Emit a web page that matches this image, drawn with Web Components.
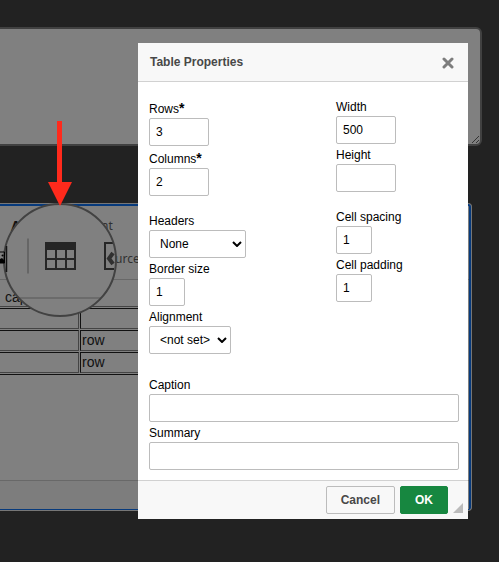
<!DOCTYPE html>
<html lang="en">
<head>
<meta charset="utf-8">
<title>Table Properties</title>
<style>
html, body { height: 100%; }
body { margin: 0; background: #222; font-family: "Liberation Sans", Arial, sans-serif; }
</style>
</head>
<body>
<editor-page></editor-page>
<script>
class BaseElement extends HTMLElement {
  constructor() {
    super();
    this.attachShadow({ mode: 'open' });
  }
  connectedCallback() {
    this.shadowRoot.innerHTML = this.template();
  }
}

/* Labelled text box or drop-down */
customElements.define('form-field', class extends BaseElement {
  template() {
    const label = this.getAttribute('label');
    const required = this.hasAttribute('required');
    const options = this.getAttribute('options');
    const value = this.getAttribute('value') || '';
    const control = options
      ? `<div class="pick"><select id="c">${options.split('|').map(o => `<option>${o.replace(/</g, '&lt;')}</option>`).join('')}</select>
         <svg width="10" height="6" viewBox="0 0 10 6" fill="none" stroke="#000" stroke-width="2"><path d="M1 1l4 4 4-4"/></svg></div>`
      : `<input id="c" type="text" value="${value}">`;
    return `<style>
      :host { display: flex; flex-direction: column; align-items: flex-start; padding-bottom: 3px; }
      label { font-size: 12px; line-height: 16px; height: 16px; margin-bottom: 1px; color: #000; white-space: nowrap; }
      :host([required]) label { height: 18px; line-height: 20px; }
      b { font-size: 14px; line-height: 1; }
      .pick { position: relative; width: var(--w, 100%); }
      svg { position: absolute; right: 4px; top: 11px; pointer-events: none; }
      input, select { box-sizing: border-box; height: 28px; width: var(--w, 100%); border: 1px solid #bcbcbc; border-radius: 2px;
        background: #fff; color: #000; font: 12px "Liberation Sans", Arial, sans-serif; margin: 0; padding: 4px 6px; display: block; outline: 0; }
      select { appearance: none; padding: 0 10px; }
    </style><label for="c">${label}${required ? '<b>*</b>' : ''}</label>${control}`;
  }
});

customElements.define('dialog-button', class extends BaseElement {
  template() {
    return `<style>
      :host { display: block; }
      button { display: block; height: 28px; border: 1px solid #bcbcbc; border-radius: 2px; background: #f8f8f8; color: #484848;
        font: bold 12px "Liberation Sans", Arial, sans-serif; padding: 0 14px; }
      :host([primary]) button { background: #178740; border-color: #178740; color: #fff; }
    </style><button type="button"><slot></slot></button>`;
  }
});

customElements.define('properties-dialog', class extends BaseElement {
  template() {
    return `<style>
      :host { display: flex; flex-direction: column; background: #fff; }
      header { display: flex; justify-content: space-between; align-items: center; height: 38px; padding: 0 14px 0 12px;
        background: #f8f8f8; border-bottom: 1px solid #d1d1d1; }
      h1 { margin: 0; font-size: 12px; line-height: 16px; color: #484848; }
      header button { border: 0; background: none; padding: 0; width: 12px; height: 12px; display: block; margin-top: 2px; }
      header svg { display: block; }
      main { padding: 17px 9px 7px 11px; display: flex; flex-direction: column; gap: 20px; }
      .pair { display: grid; grid-template-columns: 187px 1fr; }
      .col { display: flex; flex-direction: column; gap: 14px; }
      footer { position: relative; display: flex; justify-content: flex-end; gap: 5px; padding: 5px 20px 5px 0;
        background: #f8f8f8; border-top: 1px solid #d1d1d1; }
      .grip { position: absolute; right: 5px; bottom: 6px; }
    </style>
    <header><h1>Table Properties</h1>
      <button type="button" aria-label="Close"><svg width="12" height="12" viewBox="0 0 12 12" stroke="#7d7d7d" stroke-width="3" stroke-linecap="round"><path d="M2 2l8 8M10 2l-8 8"/></svg></button>
    </header>
    <main>
      <div class="pair">
        <div class="col">
          <div>
            <form-field label="Rows" required value="3" style="--w:60px"></form-field>
            <form-field label="Columns" required value="2" style="--w:60px"></form-field>
          </div>
          <div>
            <form-field label="Headers" options="None|First Row|First column|Both" style="--w:97px"></form-field>
            <form-field label="Border size" value="1" style="--w:36px"></form-field>
            <form-field label="Alignment" options="&lt;not set>|Left|Center|Right" style="--w:82px"></form-field>
          </div>
        </div>
        <div class="col">
          <div>
            <form-field label="Width" value="500" style="--w:60px"></form-field>
            <form-field label="Height" style="--w:60px"></form-field>
          </div>
          <div>
            <form-field label="Cell spacing" value="1" style="--w:36px"></form-field>
            <form-field label="Cell padding" value="1" style="--w:36px"></form-field>
          </div>
        </div>
      </div>
      <div>
        <form-field label="Caption"></form-field>
        <form-field label="Summary"></form-field>
      </div>
    </main>
    <footer>
      <dialog-button>Cancel</dialog-button><dialog-button primary>OK</dialog-button>
      <svg class="grip" width="10" height="10"><path d="M10 0v10H0z" fill="#bcbcbc"/></svg>
    </footer>`;
  }
});

/* Magnified toolbar piece with its pointer arrow */
customElements.define('icon-callout', class extends BaseElement {
  template() {
    return `<style>:host { display: block; } svg { display: block; }</style>
    <svg width="118" height="198" viewBox="0 120 118 198">
      <defs><clipPath id="lens"><circle cx="60" cy="260" r="56"/></clipPath></defs>
      <circle cx="60" cy="260" r="56" fill="#808080"/>
      <g clip-path="url(#lens)">
        <path d="M28 238.500v35" stroke="#666" stroke-width="2"/>
        <path d="M0 298h102" stroke="#6b6b6b" stroke-width="2"/>
        <path d="M45 242h31v28H45z" fill="#262626"/>
        <path d="M47 250h8v8h-8zM57 250h8v8h-8zM67 250h7v8h-7zM47 260h8v8h-8zM57 260h8v8h-8zM67 260h7v8h-7z" fill="#808080"/>
        <path d="M114 243h-9v26h9" fill="none" stroke="#262626" stroke-width="2"/>
        <path d="M113 253l-4 5.500 4 5.500" fill="none" stroke="#303030" stroke-width="4"/>
      </g>
      <circle cx="60" cy="260" r="56" fill="none" stroke="#424242" stroke-width="2"/>
      <path d="M6.500 246v26" stroke="#151515" stroke-width="1.500"/>
      <path d="M0 252h4.500v11H0" fill="none" stroke="#000"/>
      <path d="M0 259l2-1 2 2v3H0z" fill="#000"/><circle cx="2.500" cy="255.500" r="1" fill="#000"/>
      <path d="M57 121h5v61h10l-12 24-12-24h9z" fill="#ff2a1c"/>
    </svg>`;
  }
});

customElements.define('rich-editor', class extends BaseElement {
  template() {
    return `<style>
      :host { box-sizing: border-box; display: flex; flex-direction: column; background: #808080; border: solid #777; border-width: 1px 1px 1px 0; border-radius: 0 4px 4px 0; }
      .ring { flex: 1; display: flex; flex-direction: column; border: solid #073a7c; border-width: 2px 2px 1px 0; border-radius: 0 3px 3px 0; }
      .bar { box-sizing: border-box; height: 74px; padding: 11px 0 0 11px; border-bottom: 1px solid #686868;
        font: 12px "Noto Sans", sans-serif; color: #303030; display: flex; flex-direction: column; gap: 15px; }
      .bar span, .bar b { line-height: 18px; }
      .styles { display: grid; grid-template-columns: 90px 1fr; }
      b { color: #111; font-size: 14px; }
      .src { padding-left: 104px; }
      .body { flex: 1; font-size: 14px; color: #111; }
      table { border: 1px solid; border-color: #444 #111 #111 #444; border-spacing: 1px; width: calc(100% - 20px); border-left: 0; margin-left: -1px; }
      caption { text-align: left; padding: 9px 0 0 6px; line-height: 17px; }
      td { border: 1px solid; border-color: #111 #444 #444 #111; height: 17px; padding: 1px; line-height: 17px; }
      td:first-child { width: 76px; border-left: 0; }
      .path { height: 28px; border-top: 1px solid #686868; background: #7d7d7d; }
    </style>
    <div class="ring">
      <div class="bar"><div class="styles"><b>A</b><span>nt</span></div><span class="src">urce</span></div>
      <div class="body"><table><caption>cap</caption>
        <tr><td></td><td></td></tr><tr><td></td><td>row</td></tr><tr><td></td><td>row</td></tr></table></div>
      <div class="path"></div>
    </div>`;
  }
});

customElements.define('editor-page', class extends BaseElement {
  template() {
    return `<style>
      :host { display: block; position: relative; min-height: 100%; overflow: hidden; box-sizing: border-box; padding: 27px 0 51px; }
      textarea { display: block; box-sizing: border-box; width: calc(100% - 17px); height: 119px; margin: 0; border: solid #414141; border-width: 2px 2px 2px 0;
        border-radius: 0 6px 6px 0; background: #808080; resize: none; outline: 0; }
      .text { position: relative; }
      .text svg { position: absolute; right: 19px; bottom: 2px; }
      rich-editor { margin-top: 57px; height: 308px; width: calc(100% - 27px); }
      icon-callout { position: absolute; left: 0; top: 120px; }
      properties-dialog { position: absolute; top: 43px; left: 138px; right: 31px; }
    </style>
    <div class="text"><textarea aria-label="Text"></textarea><svg width="9" height="9" stroke="#333"><path d="M1 8l7-7M5 8l3-3"/></svg></div>
    <rich-editor></rich-editor>
    <icon-callout></icon-callout>
    <properties-dialog></properties-dialog>`;
  }
});
</script>
</body>
</html>
